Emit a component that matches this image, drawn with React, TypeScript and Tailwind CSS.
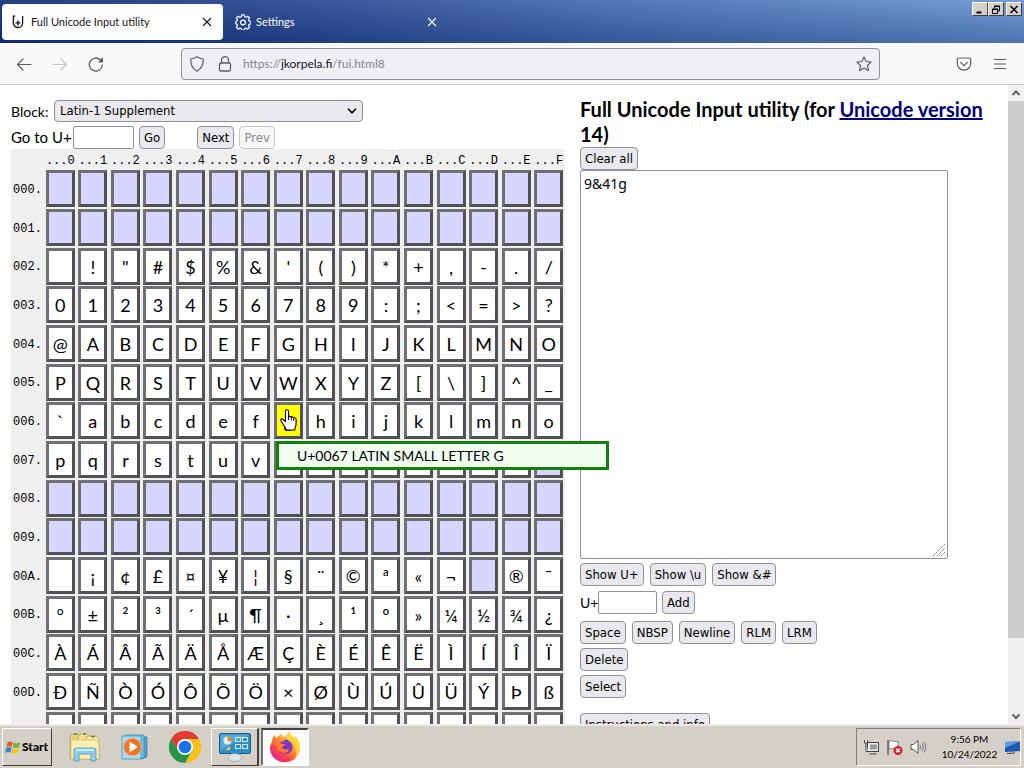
import { ReactNode } from "react";

const COLS = "0123456789ABCDEF".split("");

type RowData = { label: string; cells: string[]; empty?: boolean };

const blank = Array.from({ length: 16 }, () => "");

const ROWS: RowData[] = [
  { label: "000.", cells: blank, empty: true },
  { label: "001.", cells: blank, empty: true },
  { label: "002.", cells: [..." !\"#$%&'()*+,-./"] },
  { label: "003.", cells: [..."0123456789:;<=>?"] },
  { label: "004.", cells: [..."@ABCDEFGHIJKLMNO"] },
  { label: "005.", cells: [..."PQRSTUVWXYZ[\\]^_"] },
  { label: "006.", cells: [..."`abcdefghijklmno"] },
  { label: "007.", cells: [..."pqrstuvwxyz{|}~", ""] },
  { label: "008.", cells: blank, empty: true },
  { label: "009.", cells: blank, empty: true },
  { label: "00A.", cells: [..." ¡¢£¤¥¦§¨©ª«¬", "", "®", "¯"] },
  { label: "00B.", cells: [..."°±²³´µ¶·¸¹º»¼½¾¿"] },
  { label: "00C.", cells: [..."ÀÁÂÃÄÅÆÇÈÉÊËÌÍÎÏ"] },
  { label: "00D.", cells: [..."ÐÑÒÓÔÕÖ×ØÙÚÛÜÝÞß"] },
  { label: "00E.", cells: [..."àáâãäåæçèéêëìíîï"] },
];

function Btn({ children, disabled = false }: { children: ReactNode; disabled?: boolean }) {
  return (
    <button
      disabled={disabled}
      className="h-[23px] shrink-0 rounded border border-[#8f8f9d] bg-[#e9e9ed] px-1 pt-px font-['DejaVu_Sans_Condensed','DejaVu_Sans',sans-serif] text-[13px] leading-5 whitespace-nowrap text-black disabled:border-[#c9c9d0] disabled:bg-[#f7f7f9] disabled:text-[#86868c]"
    >
      {children}
    </button>
  );
}

function CloseX() {
  return (
    <svg viewBox="0 0 10 10" className="size-[10px]" fill="none" stroke="currentColor" strokeWidth="1.1">
      <path d="M1 1l8 8M9 1l-8 8" />
    </svg>
  );
}

function WindowButton({ label, children }: { label: string; children: ReactNode }) {
  return (
    <button
      aria-label={label}
      className="flex h-[14px] w-4 items-center justify-center border border-t-white border-r-[#404040] border-b-[#404040] border-l-white bg-[#d4d0c8]"
    >
      <svg viewBox="0 0 12 11" className="h-[11px] w-3" fill="none" stroke="#000">
        {children}
      </svg>
    </button>
  );
}

function TitleBar() {
  return (
    <header className="flex h-[43px] shrink-0 items-start bg-[linear-gradient(to_bottom,rgba(255,255,255,0.06),rgba(0,20,80,0.28)),linear-gradient(to_right,#16347c,#2c4c94_30%,#4a70b2_60%,#6c98d4)] pt-1 pl-[2px]">
      <div className="flex h-9 w-[221px] items-center rounded bg-white pr-[11px] pl-[10px] text-[#15141a]">
        <svg viewBox="0 0 12 14" className="h-[14px] w-3 shrink-0" fill="none" stroke="#15141a" strokeWidth="1.3">
          <path d="M3.200 1.200H1.400v7a4.300 4.300 0 0 0 4.300 4.300h.6a4.300 4.300 0 0 0 4.300-4.300V1M6 5.400v5M3.500 7.900h5" />
        </svg>
        <span className="ml-[7px] flex-1 text-[11px] whitespace-nowrap">Full Unicode Input utility</span>
        <button aria-label="Close tab">
          <CloseX />
        </button>
      </div>
      <div className="flex h-9 w-[225px] items-center pr-[11px] pl-3 text-white">
        <svg viewBox="0 0 16 16" className="size-4 shrink-0" fill="none" stroke="#fff" strokeWidth="1.2" strokeLinejoin="round">
          <path d="M6.700 .8h2.600l.4 1.900 1.400.6 1.700-1.100 1.800 1.800-1.100 1.700.6 1.400 1.900.4v2.400l-1.900.4-.6 1.400 1.100 1.700-1.800 1.800-1.700-1.100-1.400.6-.4 1.500H6.700l-.4-1.500-1.400-.6-1.700 1.100-1.800-1.800 1.100-1.700-.6-1.400L.800 9.900V7.500l1.100-.4.600-1.400-1.100-1.700 1.800-1.800 1.700 1.100 1.400-.6z" />
          <circle cx="8" cy="8.500" r="2.400" />
        </svg>
        <span className="ml-[5px] flex-1 text-[11px]">Settings</span>
        <button aria-label="Close tab">
          <CloseX />
        </button>
      </div>
      <div className="-mt-[2px] mr-[2px] ml-auto flex">
        <WindowButton label="Minimize">
          <path d="M2.500 8.500h5" strokeWidth="2" />
        </WindowButton>
        <WindowButton label="Restore">
          <path d="M4.500 4V2.500h5v4.500H8M4 2h6M2.500 5.500h5v4h-5zM2 5h6" />
        </WindowButton>
        <span className="w-[2px]" />
        <WindowButton label="Close">
          <path d="M2.500 2l7 7M9.500 2l-7 7" strokeWidth="1.500" />
        </WindowButton>
      </div>
    </header>
  );
}

function Toolbar() {
  return (
    <nav className="flex h-[42px] shrink-0 items-center border-b border-[#cccccf] bg-[#f9f9fb] pr-[17px] pl-4 text-[#5b5b66]">
      <button aria-label="Back">
        <svg viewBox="0 0 16 16" className="size-4" fill="none" stroke="currentColor" strokeWidth="1.200" strokeLinecap="round" strokeLinejoin="round">
          <path d="M15 8.500H1.500M7 3L1.500 8.500 7 14" />
        </svg>
      </button>
      <button aria-label="Forward" disabled className="ml-5 text-[#c4c4c8]">
        <svg viewBox="0 0 16 16" className="size-4" fill="none" stroke="currentColor" strokeWidth="1.200" strokeLinecap="round" strokeLinejoin="round">
          <path d="M1 8.500h13.500M9 3L14.500 8.500 9 14" />
        </svg>
      </button>
      <button aria-label="Reload" className="ml-5">
        <svg viewBox="0 0 16 16" className="size-4" fill="none" stroke="currentColor" strokeWidth="1.300" strokeLinecap="round">
          <path d="M14.300 9A6.500 6.500 0 1 1 12.500 4" />
          <path d="M15 1.200v5.200H9.800z" fill="currentColor" stroke="none" />
        </svg>
      </button>
      <div className="ml-[77px] flex h-8 w-[70.500%] items-center rounded border border-[#8f8f9d] bg-[#f0f0f4] px-[7px]">
        <svg viewBox="0 0 16 16" className="size-4 shrink-0" fill="none" stroke="currentColor" strokeWidth="1.200" strokeLinejoin="round">
          <path d="M8 .8c2 1.500 4.200 2 6.300 2.200.2 5.500-1.600 9.500-6.300 12.200C3.300 12.500 1.500 8.500 1.700 3 3.800 2.800 6 2.300 8 .8z" />
        </svg>
        <svg viewBox="0 0 14 16" className="ml-[13px] h-4 w-[14px] shrink-0" fill="none" stroke="currentColor" strokeWidth="1.300">
          <path d="M3.500 7V4.200a3.500 3.500 0 0 1 7 0V7" />
          <rect x="1.500" y="7" width="11" height="8" rx="1.500" />
        </svg>
        <div role="textbox" aria-label="Address" className="ml-[11px] flex-1 text-[12px] text-[#85858d]">
          https://<span className="text-[#15141a]">jkorpela.fi</span>/fui.html8
        </div>
        <button aria-label="Bookmark this page">
          <svg viewBox="0 0 16 16" className="size-4" fill="none" stroke="currentColor" strokeWidth="1.200" strokeLinejoin="round">
            <path d="M8 .9l2.100 4.600 5 .6-3.700 3.400 1 5L8 12l-4.400 2.500 1-5L.9 6.100l5-.6z" />
          </svg>
        </button>
      </div>
      <button aria-label="Save to Pocket" className="ml-auto">
        <svg viewBox="0 0 16 16" className="size-4" fill="none" stroke="currentColor" strokeWidth="1.200" strokeLinecap="round" strokeLinejoin="round">
          <path d="M2.500 2h11c.7 0 1.200.5 1.200 1.200V7.500a6.700 6.700 0 0 1-13.400 0V3.200C1.300 2.500 1.800 2 2.500 2z" />
          <path d="M4.800 6.500L8 9.600l3.200-3.100" />
        </svg>
      </button>
      <button aria-label="Menu" className="ml-[21px]">
        <svg viewBox="0 0 14 14" className="size-[14px]" fill="none" stroke="currentColor" strokeWidth="1.200">
          <path d="M1 2.500h12M1 7h12M1 11.500h12" />
        </svg>
      </button>
    </nav>
  );
}

function HandCursor() {
  return (
    <svg viewBox="0 0 17 22" className="pointer-events-none absolute top-2 left-2 z-20 h-[22px] w-[17px]">
      <path
        d="M5.500 12.500V2.300a1.500 1.500 0 0 1 3 0V8c.3-1 2.800-.9 2.800.5.400-.9 2.500-.8 2.500.7.500-.7 2.300-.4 2.300 1V15c0 2-1.300 3-1.300 6H6c0-2.500-2-4-3-6L.900 11.500c-.6-1.400 1-2.300 2.200-1z"
        fill="#fff"
        stroke="#000"
        strokeWidth="1.100"
        strokeLinejoin="round"
      />
      <path d="M8.500 8v3M11.300 8.500v3M13.800 9.500v2.500" stroke="#000" strokeWidth="1" />
    </svg>
  );
}

function CharTable() {
  return (
    <table className="w-[554px] table-fixed border-collapse bg-[#efefef] font-['Liberation_Mono',monospace] text-[12px]">
      <thead>
        <tr className="h-5">
          <td className="w-[33px] p-0" />
          {COLS.map((c) => (
            <th key={c} scope="col" className="p-0 pt-1 text-center leading-4 font-normal">
              ...{c}
            </th>
          ))}
        </tr>
      </thead>
      <tbody>
        {ROWS.map((row) => (
          <tr key={row.label} className="h-[39px] [&:nth-child(3n)]:h-[38px]">
            <th scope="row" className="p-0 pt-[2px] text-center leading-5 font-normal">
              {row.label}
            </th>
            {row.cells.map((ch, i) => {
              const active = ch === "g";
              const empty = row.empty || ch === "";
              const fill = active ? "bg-[#ffff00]" : empty ? "bg-[#d6d6ff]" : "bg-white";
              return (
                <td key={i} className="relative p-0 align-top">
                  <button
                    aria-label={"U+" + row.label.slice(0, 3) + COLS[i]}
                    className={
                      "mx-auto mt-px block h-[37px] w-[29px] border-3 border-t-[#707074] border-r-[#505055] border-b-[#505055] border-l-[#707074] text-center font-['Lato',sans-serif] text-[18px] leading-[30px] text-black " +
                      fill
                    }
                  >
                    {ch}
                  </button>
                  {active && (
                    <>
                      <HandCursor />
                      <div
                        role="tooltip"
                        className="absolute top-full left-1 z-10 mt-px flex h-[29px] w-[333px] items-center border-3 border-[#118011] bg-[#f0fff0] pl-[18px] font-['Lato',sans-serif] text-[14px] whitespace-nowrap text-black"
                      >
                        U+0067 LATIN SMALL LETTER G
                      </div>
                    </>
                  )}
                </td>
              );
            })}
          </tr>
        ))}
      </tbody>
    </table>
  );
}

function LeftPane() {
  return (
    <section className="w-[555px] shrink-0 pt-[15px]">
      <div className="flex h-[22px] items-center gap-[5px]">
        <label htmlFor="block" className="w-[38px] text-[14px] whitespace-nowrap">
          Block:
        </label>
        <div className="relative">
          <select
            id="block"
            className="block h-[22px] w-[309px] appearance-none rounded border border-[#8f8f9d] bg-[#e9e9ed] pl-[5px] font-['DejaVu_Sans_Condensed','DejaVu_Sans',sans-serif] text-[13px] leading-5"
          >
            <option>Latin-1 Supplement</option>
          </select>
          <svg viewBox="0 0 10 6" className="pointer-events-none absolute top-2 right-[6px] h-[6px] w-[10px]" fill="none" stroke="#000" strokeWidth="1.600">
            <path d="M1 .8l4 4 4-4" />
          </svg>
        </div>
      </div>
      <div className="mt-1 flex h-[23px] items-center">
        <label htmlFor="goto" className="w-[62px] text-[15px] whitespace-nowrap">
          Go to U+
        </label>
        <input id="goto" className="mr-[5px] h-[23px] w-[61px] rounded-xs border border-[#8f8f9d] bg-white px-1 text-[13px]" />
        <Btn>Go</Btn>
        <div className="ml-8 flex gap-[5px]">
          <Btn>Next</Btn>
          <Btn disabled>Prev</Btn>
        </div>
      </div>
      <CharTable />
    </section>
  );
}

function RightPane() {
  return (
    <section className="min-w-0 flex-1 pt-3 pr-6 pl-[14px]">
      <h1 className="text-[20px] leading-[25px] font-bold">
        Full Unicode Input utility (for{" "}
        <a href="#version" className="text-[#00007b] underline">
          Unicode version
        </a>{" "}
        14)
      </h1>
      <div className="flex">
        <Btn>Clear all</Btn>
      </div>
      <label htmlFor="output" className="sr-only">
        Text
      </label>
      <div className="relative w-[368px]">
        <textarea
          id="output"
          defaultValue="9&41g"
          className="block h-[389px] w-full resize-none rounded-xs border border-[#8f8f9d] bg-white px-[3px] pt-[2px] font-['Noto_Sans',sans-serif] text-[14px] leading-[22px]"
        />
        <svg viewBox="0 0 14 14" className="pointer-events-none absolute right-[2px] bottom-[2px] size-[14px]" stroke="#777" strokeWidth="1" strokeDasharray="1.500 0.700">
          <path d="M1 13L13 1M5 13l8-8M9 13l4-4" />
        </svg>
      </div>
      <div className="mt-1 flex gap-[6px]">
        <Btn>Show U+</Btn>
        <Btn>Show \u</Btn>
        <Btn>Show &amp;#</Btn>
      </div>
      <div className="mt-[5px] flex items-center">
        <label htmlFor="code" className="w-[18px] text-[14px] whitespace-nowrap">
          U+
        </label>
        <input id="code" className="mr-[5px] h-[23px] w-[59px] rounded-xs border border-[#8f8f9d] bg-white px-1 text-[13px]" />
        <Btn>Add</Btn>
      </div>
      <div className="mt-[7px] flex gap-[6px]">
        <Btn>Space</Btn>
        <Btn>NBSP</Btn>
        <Btn>Newline</Btn>
        <Btn>RLM</Btn>
        <Btn>LRM</Btn>
      </div>
      <div className="mt-1 flex flex-col items-start gap-1">
        <Btn>Delete</Btn>
        <Btn>Select</Btn>
      </div>
      <div className="mt-[15px] flex">
        <Btn>Instructions and info</Btn>
      </div>
    </section>
  );
}

function ScrollBar() {
  return (
    <div className="flex w-4 shrink-0 flex-col bg-[#f0f0f0]">
      <svg viewBox="0 0 16 16" className="size-4 shrink-0" fill="none" stroke="#606060" strokeWidth="2">
        <path d="M4.500 10L8 6.500l3.500 3.500" />
      </svg>
      <div className="min-h-0 flex-1">
        <div className="h-[88.500%] bg-[#cdcdcd]" />
      </div>
      <svg viewBox="0 0 16 16" className="size-4 shrink-0" fill="none" stroke="#606060" strokeWidth="2">
        <path d="M4.500 6.500L8 10l3.500-3.500" />
      </svg>
    </div>
  );
}

function WindowsFlag() {
  return (
    <svg viewBox="0 0 16 15" className="h-[15px] w-4 shrink-0">
      <path d="M2.500 2.500C4 1.200 6 1.200 7.800 2.300L6.800 7C5 6 3.200 6 1.200 7.200z" fill="#e8592a" />
      <path d="M8.600 2.600c2 1 4 1 6.600-.3L14 7.200c-2 1.100-4.400 1.100-6.300.1z" fill="#7db53c" />
      <path d="M1 8c2-1.200 4-1.200 5.600-.2l-1.100 4.900C3.700 11.700 2 11.800 0 13z" fill="#3f83cc" />
      <path d="M7.400 8.200c2 1 4.200 1 6.300 0l-1.200 4.800c-2 1.200-4.200 1.200-6.200.1z" fill="#f8c12c" />
    </svg>
  );
}

function ExplorerIcon() {
  return (
    <svg viewBox="0 0 32 30" className="h-[30px] w-8">
      <path d="M1 5l2-3h7l2 3v22H1z" fill="#ecd27a" stroke="#b99a45" strokeWidth=".7" />
      <path d="M9 5l2-3h8l2 3v22H9z" fill="#f4e08e" stroke="#b99a45" strokeWidth=".7" />
      <path d="M17 6l1-2h9l3 3v20H17z" fill="#f6e59a" stroke="#b99a45" strokeWidth=".7" />
      <path d="M5 2.200h3M14 2h3M22 4.500h4" stroke="#4c8c50" strokeWidth="1.500" />
      <path d="M2 8h24l4 3v16H2z" fill="#faf0b6" stroke="#cdb25e" strokeWidth=".7" />
      <path d="M5 29V18q0-2 2-2h18q2 0 2 2v11h-5v-7H10v7z" fill="#8fcdea" stroke="#4a95bf" strokeWidth=".8" />
      <path d="M7 18h18" stroke="#dff4fd" strokeWidth="1.500" />
    </svg>
  );
}

function MediaIcon() {
  return (
    <svg viewBox="0 0 28 28" className="size-7">
      <path d="M9 2l17 2v20l-6 2z" fill="#4fa1cf" stroke="#3480ad" strokeWidth=".7" />
      <path d="M5 2h18v23H5z" fill="#7abfe2" stroke="#3d8bb6" strokeWidth=".7" />
      <path d="M1 3h19v23H1z" fill="#a8daf0" stroke="#4997c1" strokeWidth=".8" />
      <circle cx="11.500" cy="14" r="8.800" fill="#ee7421" stroke="#f7b27c" strokeWidth="1" />
      <path d="M8.500 8.500l8.500 5.500-8.500 5.500z" fill="#fff" />
    </svg>
  );
}

function ChromeIcon() {
  return (
    <svg viewBox="0 0 32 32" className="size-8">
      <path d="M16 8h13.900A16 16 0 0 0 2.100 8l7 12z" fill="#e33b2e" />
      <path d="M22.900 20L16 32A16 16 0 0 0 29.900 8H16z" fill="#fbc116" />
      <path d="M9.100 20L2.100 8A16 16 0 0 0 16 32l6.900-12z" fill="#269447" />
      <circle cx="16" cy="16" r="8" fill="#fff" />
      <circle cx="16" cy="16" r="6.300" fill="#1a73e8" />
    </svg>
  );
}

function ControlPanelIcon() {
  return (
    <svg viewBox="0 0 34 30" className="h-[30px] w-[34px]">
      <rect x="1.500" y="1.500" width="31" height="20" rx="1.500" fill="#2d8ecb" stroke="#1a5f91" />
      <path d="M2.500 2.500h29L2.500 18z" fill="#6fbde6" opacity=".6" />
      <circle cx="9.500" cy="8.500" r="4" fill="#d6effb" />
      <path d="M9.500 8.500V4a4.500 4.500 0 0 1 4 6z" fill="#f07e25" />
      <path d="M7 18l5-4v4z" fill="#f6c445" />
      <g fill="none" stroke="#d9f1fd">
        <rect x="17.500" y="5.500" width="5" height="4" />
        <rect x="24.500" y="5.500" width="5" height="4" />
        <rect x="17.500" y="12.500" width="5" height="4" />
        <rect x="24.500" y="12.500" width="5" height="4" />
      </g>
      <path d="M14 22h6v3h-6z" fill="#8c9aa5" />
      <ellipse cx="17" cy="25.500" rx="7" ry="4" fill="#dbe2e8" stroke="#8d9aa4" strokeWidth=".7" />
    </svg>
  );
}

function FirefoxIcon() {
  return (
    <svg viewBox="0 0 32 32" className="size-8">
      <defs>
        <linearGradient id="fx-body" x1="0.850" y1="0.100" x2="0.200" y2="0.900">
          <stop offset="0" stopColor="#ffe94a" />
          <stop offset=".4" stopColor="#ff9a24" />
          <stop offset=".75" stopColor="#ff4250" />
          <stop offset="1" stopColor="#e8248b" />
        </linearGradient>
      </defs>
      <path d="M3 11c0-3 1-5 2.500-7 .3 1.500 1 2.500 2 3.300C9 5 11 3.500 13.500 3c-.7 1-1 2-.7 3 1.500-.6 3-.6 4.700 0C17.300 4 18.500 2 20.500.7c.5 3 2.500 4.300 4.700 6.500.6-.5.8-1.300.7-2.200 3.600 3 5.300 7.500 5 12C30.500 25.500 24 31.300 16 31.300S1 25 1 17.500C1 15 1.700 12.700 3 11z" fill="url(#fx-body)" />
      <path d="M20.500.7c.5 3 2.500 4.300 4.700 6.500.6-.5.8-1.300.7-2.200 3.600 3 5.300 7.500 5 12-.3 4-2 7.500-4.500 10C29 20 26 12 20 9c-1.500-1-2.500-2-2.500-3.500.2-2 1-3.600 3-4.800z" fill="#ffd83a" opacity=".8" />
      <path d="M16 8.500c4.800.6 7.500 4 7.500 7.700 0 4-3.300 6.700-7.200 6.700-4 0-7-2.600-7-6.300 0-2.500 1.300-4.800 3.200-6.100 1 .5 2.500.2 3.500-2z" fill="#7c36c4" />
      <path d="M5 12c3-2 6-.5 7.500 1h4c-.4 1.700-2.500 1.700-3.300 3-.5 1.200 1.300 3 3.700 2.500 2-.4 3.500 0 3 1-1.500 2.500-5 3-8 1.500C8.500 19 7 15 5 12z" fill="#ff7a2b" />
    </svg>
  );
}

function TaskBar() {
  return (
    <footer className="flex h-11 shrink-0 items-center border-t-2 border-t-[#eceae4] bg-[#d4d0c8] pr-[3px] pl-[2px]">
      <button className="flex h-[38px] w-[50px] items-center gap-px border border-t-white border-r-[#404040] border-b-[#404040] border-l-white px-[2px] text-[12px] font-black text-black">
        <WindowsFlag />
        Start
      </button>
      <div className="ml-[10px] flex">
        <button aria-label="File Explorer" className="flex h-[38px] w-[50px] items-center justify-center pr-1">
          <ExplorerIcon />
        </button>
        <button aria-label="Media Player" className="flex h-[38px] w-[50px] items-center justify-center pr-1">
          <MediaIcon />
        </button>
        <button aria-label="Chrome" className="flex h-[38px] w-[49px] items-center justify-center pr-1">
          <ChromeIcon />
        </button>
        <button aria-label="Control Panel" className="flex h-[38px] w-12 items-center justify-center border border-t-white border-r-2 border-r-[#404040] border-b-[#404040] border-l-white">
          <ControlPanelIcon />
        </button>
        <button aria-label="Firefox" className="ml-[2px] flex h-[38px] w-12 items-center justify-center border-2 border-t-[#404040] border-r-white border-b-white border-l-[#707070] bg-[#fafafa]">
          <FirefoxIcon />
        </button>
      </div>
      <div className="ml-auto flex h-[38px] w-[165px] items-center border border-t-[#808080] border-r-white border-b-white border-l-[#808080] pl-[6px]">
        <svg viewBox="0 0 16 16" className="size-4">
          <rect x="4.500" y="3.500" width="11" height="9" fill="#eee" stroke="#444" />
          <rect x="7" y="5.500" width="7" height="5" fill="#999" />
          <path d="M6.500 15h7M1.500 1v3h3V1M3 4v8.500h2" stroke="#444" fill="#fff" />
        </svg>
        <svg viewBox="0 0 18 17" className="ml-[7px] h-[17px] w-[18px]">
          <path d="M2 1v15" stroke="#666" strokeWidth="1.500" />
          <path d="M3 2c3-1 4 1 9 .5V10C8 10.500 6 9 3 10z" fill="#fff" stroke="#666" strokeWidth=".8" />
          <circle cx="12" cy="11.500" r="4.500" fill="#d8232e" />
          <path d="M10.200 9.700l3.600 3.600M13.800 9.700l-3.600 3.600" stroke="#fff" strokeWidth="1.500" />
        </svg>
        <svg viewBox="0 0 16 16" className="ml-[6px] size-4" fill="none" stroke="#777">
          <path d="M1 5.500h2.500L8 1.500v13L3.500 10.500H1z" fill="#fff" stroke="#555" />
          <path d="M10 6q1.500 2 0 4M12 4q3 4 0 8M14 2.500q3.500 5.500 0 11" />
        </svg>
        <div className="flex-1 pl-2 text-center text-[10px] leading-[15px] whitespace-nowrap">
          <div>9:56 PM</div>
          <div>10/24/2022</div>
        </div>
        <svg viewBox="0 0 15 13" className="h-[13px] w-[15px]">
          <path d="M0 1l15-.5V10L0 11z" fill="#1d58ae" />
          <path d="M0 1l15-.5L0 7z" fill="#5b9be4" />
          <path d="M2 12.500l8-.5" stroke="#444" />
        </svg>
      </div>
    </footer>
  );
}

export default function App() {
  return (
    <div className="flex h-screen flex-col overflow-hidden bg-white font-['Lato','Noto_Sans',sans-serif] text-black">
      <TitleBar />
      <Toolbar />
      <div className="flex min-h-0 flex-1">
        <main className="flex min-w-0 flex-1 overflow-hidden pl-[11px]">
          <LeftPane />
          <RightPane />
        </main>
        <ScrollBar />
      </div>
      <TaskBar />
    </div>
  );
}
